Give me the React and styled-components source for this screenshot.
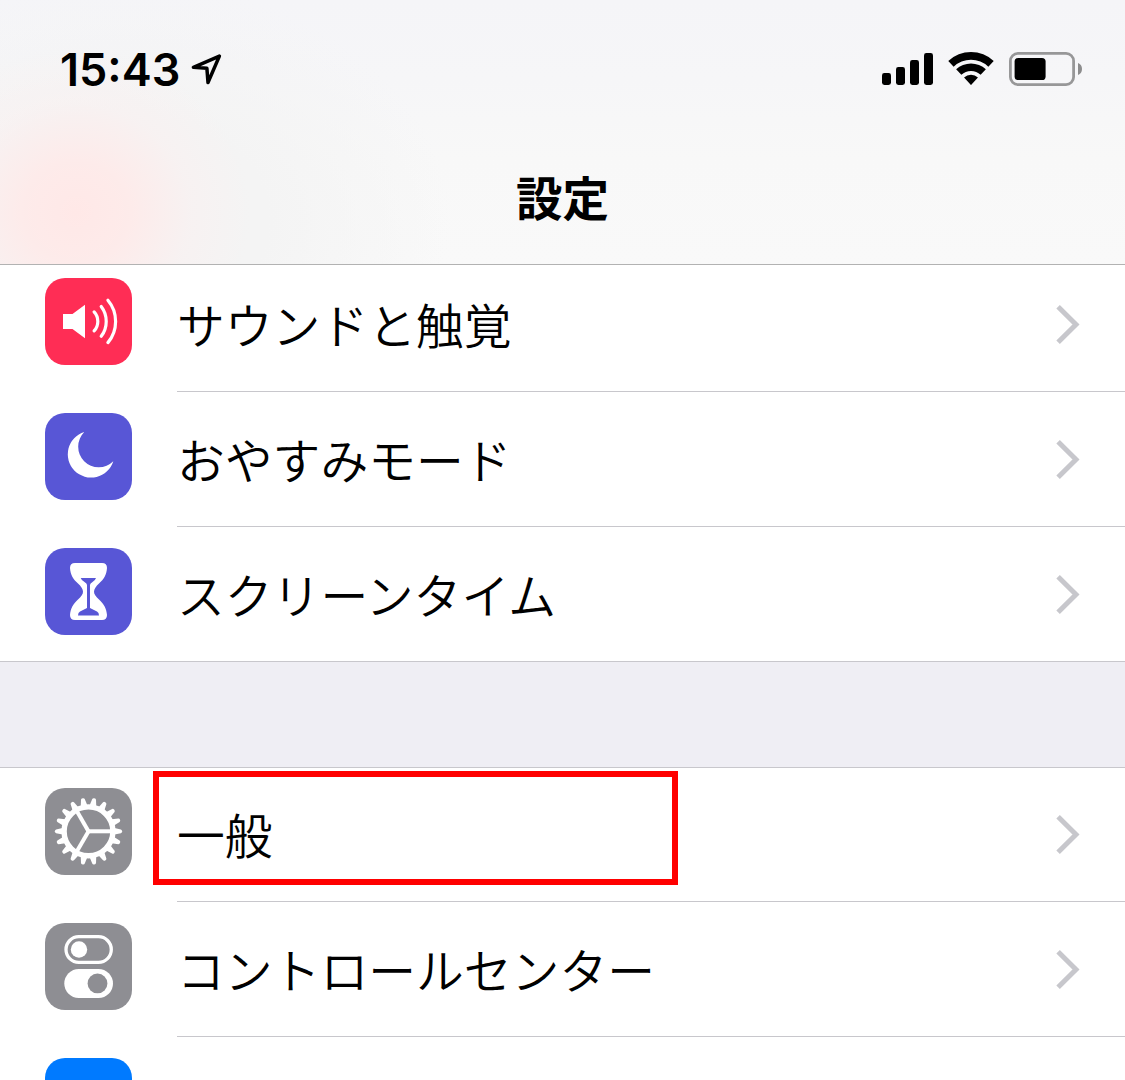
import styled, { createGlobalStyle } from 'styled-components';

const GlobalStyle = createGlobalStyle`
  * {
    box-sizing: border-box;
  }

  body {
    margin: 0;
    background-color: #efeef4;
  }
`;

const Screen = styled.div`
  display: flex;
  flex-direction: column;
  width: 1125px;
  height: 1080px;
  overflow: hidden;
  color: black;
  background-color: #efeef4;
  font-family: 'Noto Sans CJK JP', sans-serif;
`;

const Header = styled.header`
  position: relative;
  z-index: 1;
  flex: none;
  height: 265px;
  border-bottom: 1px solid #b2b2b2;
  background: radial-gradient(
      ellipse 175px 165px at 76px 212px,
      #ffe8e7 0%,
      rgba(255, 233, 232, 0.85) 30%,
      rgba(252, 238, 238, 0.4) 65%,
      rgba(246, 245, 245, 0) 100%
    ),
    radial-gradient(
      ellipse 330px 240px at 120px 220px,
      #f4f4f4 45%,
      rgba(246, 246, 247, 0) 100%
    ),
    linear-gradient(#f5f5f8 0%, #f6f6f8 30%, #f8f8f8 60%, #f9f9f9 100%);
`;

const StatusBar = styled.div`
  display: flex;
  align-items: center;
  justify-content: space-between;
  height: 138px;
  padding: 0 42px 0 60px;
`;

const StatusGroup = styled.div`
  display: flex;
  align-items: center;
  gap: ${(props) => props.$gap}px;
`;

const Time = styled.span`
  font-family: Inter, sans-serif;
  font-size: 45px;
  font-weight: 600;
  line-height: 54px;
  padding-top: 1px;
`;

const Title = styled.h1`
  margin: 0;
  font-size: 46.5px;
  font-weight: 700;
  line-height: 68px;
  text-align: center;
  padding-top: 24px;
`;

const List = styled.ul`
  flex: none;
  margin: ${(props) => (props.$scrolled ? '-8px' : '105px')} 0 0;
  padding: 0;
  list-style: none;
  background-color: white;
  border-top: ${(props) => (props.$scrolled ? 0 : '1px solid #c8c7cc')};

  > :first-child {
    margin-top: ${(props) => (props.$scrolled ? 0 : '-1px')};
  }
`;

const Row = styled.li`
  position: relative;
  display: flex;
  height: 135px;
  padding-left: 45px;
  border-bottom: ${(props) => (props.$last ? '1px solid #c8c7cc' : 0)};
`;

const AppIcon = styled.svg`
  flex: none;
  width: 87px;
  height: 87px;
  margin-top: 21px;
  border-radius: 20px;
  background-color: ${(props) => props.$color};
`;

const RowBody = styled.div`
  display: flex;
  flex: 1;
  align-items: center;
  justify-content: space-between;
  margin-left: 45px;
  padding-right: 44px;
  border-bottom: ${(props) => (props.$last ? 0 : '1px solid #c8c7cc')};
`;

const Label = styled.span`
  font-size: 47.8px;
  font-weight: 350;
  line-height: 70px;
`;

const Highlight = styled.div`
  position: absolute;
  top: 4px;
  left: 153px;
  width: 525px;
  height: 114px;
  border: 6px solid #ff0000;
`;

const LocationIcon = () => (
  <svg width='33' height='34' viewBox='189 51.5 33 34'>
    <path
      d='M219.4 55.6 193.4 66.8 206.9 67.8 208 82Z'
      fill='none'
      stroke='black'
      strokeWidth='3.5'
      strokeLinejoin='round'
    />
  </svg>
);

const SignalIcon = () => (
  <svg width='51' height='34' viewBox='0 0 51 34'>
    <rect x='0' y='21' width='9' height='12' rx='2.4' />
    <rect x='14' y='15' width='9' height='18' rx='2.4' />
    <rect x='28' y='8' width='9' height='25' rx='2.4' />
    <rect x='42' y='1' width='9' height='32' rx='2.4' />
  </svg>
);

// sector of a ring, symmetric about the vertical through (23, 33)
const ringSector = (outer, inner, degrees) => {
  const a = (degrees * Math.PI) / 180;
  const sin = Math.sin(a);
  const cos = Math.cos(a);
  return `M${23 - outer * sin} ${33 - outer * cos}
    A${outer} ${outer} 0 0 1 ${23 + outer * sin} ${33 - outer * cos}
    L${23 + inner * sin} ${33 - inner * cos}
    A${inner} ${inner} 0 0 0 ${23 - inner * sin} ${33 - inner * cos}Z`;
};

const WifiIcon = () => (
  <svg width='46' height='34' viewBox='0 0 46 34'>
    <path d={ringSector(33, 25.2, 43.5)} />
    <path d={ringSector(21.6, 14, 43.5)} />
    <path d={ringSector(10.2, 0.1, 43)} />
  </svg>
);

const BatteryIcon = () => (
  <svg width='74' height='34' viewBox='0 0 74 34'>
    <rect
      x='1.4'
      y='1.4'
      width='63.2'
      height='31.2'
      rx='7.6'
      fill='none'
      stroke='#979798'
      strokeWidth='2.8'
    />
    <rect x='5.6' y='6' width='31' height='22' rx='3.6' />
    <path d='M69 11C71.6 12 73 14.3 73 17S71.6 22 69 23Z' fill='#8c8c8d' />
  </svg>
);

const Chevron = () => (
  <svg width='25' height='41' viewBox='0 0 25 41'>
    <path
      d='M2.1 2.7 20 20.500 2.1 38.3'
      fill='none'
      stroke='#c7c7cc'
      strokeWidth='5'
    />
  </svg>
);

const SoundGlyph = () => (
  <>
    <path d='M18 36H27.5L40 26.7V60.3L27.5 51H18Z' fill='white' />
    <path
      d='M49.1 33.9A14 14 0 0 1 49.1 52.9M56.2 28.5A24.6 24.6 0 0 1 56.2 58.3M62.9 22.2A33 33 0 0 1 62.9 64.6'
      fill='none'
      stroke='white'
      strokeWidth='3.2'
      strokeLinecap='round'
    />
  </>
);

const MoonGlyph = () => (
  <path
    d='M39.3 19A23.3 23.3 0 1 0 68.3 48.3A20.4 20.4 0 0 1 39.3 19Z'
    fill='white'
  />
);

const HourglassGlyph = () => (
  <>
    <path
      d='M30 15H57Q62 15 62 20C61.5 27 59 31 54 35.5C51 38.3 49 41 49 43.7S51 48.5 54 51.5C59 56 61.5 60.5 62 67Q62 72 57 72H30Q25 72 25 67C25.5 60.5 28 56 33 51.5C36 48.5 38 46.4 38 43.7S36 38.3 33 35.5C28 31 25.5 27 25 20Q25 15 30 15Z'
      fill='white'
    />
    <path
      d='M35.7 30H51Q50.5 32 47.5 34Q45 35.7 45 37V60L52 63.4Q54 64.4 54 67.6H33Q33 64.4 35 63.4L42 60V37Q42 35.7 39.5 34Q36.2 32 35.7 30Z'
      fill='#5856d6'
    />
  </>
);

const TEETH = Array.from({ length: 18 }, (_, i) => i * 20);
const SPOKES = [0, 120, 240];

const GearGlyph = () => (
  <g transform='translate(43.5 43.3)' fill='white'>
    <circle r='24.4' fill='none' stroke='white' strokeWidth='5.4' />
    {TEETH.map((angle) => (
      <path
        key={angle}
        d='M26 -3.3 32.4 -1.9Q33.6 -1.6 33.6 0T32.4 1.9L26 3.3Z'
        transform={`rotate(${angle})`}
      />
    ))}
    {SPOKES.map((angle) => (
      <rect
        key={angle}
        x='-1'
        y='-2'
        width='25'
        height='4'
        transform={`rotate(${angle})`}
      />
    ))}
  </g>
);

const TogglesGlyph = () => (
  <>
    <rect
      x='21'
      y='13.7'
      width='45.3'
      height='25.7'
      rx='12.85'
      fill='none'
      stroke='white'
      strokeWidth='3.3'
    />
    <circle cx='34' cy='26.5' r='8.2' fill='white' />
    <rect x='19.3' y='46' width='48.7' height='29' rx='14.5' fill='white' />
    <circle cx='52.5' cy='60.4' r='9.9' fill='#8e8e93' />
  </>
);

const soundItems = [
  { label: 'サウンドと触覚', color: '#ff2d55', Glyph: SoundGlyph },
  { label: 'おやすみモード', color: '#5856d6', Glyph: MoonGlyph },
  { label: 'スクリーンタイム', color: '#5856d6', Glyph: HourglassGlyph },
];

const generalItems = [
  { label: '一般', color: '#8e8e93', Glyph: GearGlyph, highlighted: true },
  { label: 'コントロールセンター', color: '#8e8e93', Glyph: TogglesGlyph },
  { label: '', color: '#007aff' },
];

const SettingsList = ({ items, scrolled }) => (
  <List $scrolled={scrolled}>
    {items.map(({ label, color, Glyph, highlighted }, i) => {
      const last = i === items.length - 1;
      return (
        <Row key={color + label} $last={last}>
          <AppIcon viewBox='0 0 87 87' $color={color}>
            {Glyph && <Glyph />}
          </AppIcon>
          <RowBody $last={last}>
            <Label>{label}</Label>
            <Chevron />
          </RowBody>
          {highlighted && <Highlight />}
        </Row>
      );
    })}
  </List>
);

export default function App() {
  return (
    <>
      <GlobalStyle />
      <Screen>
        <Header>
          <StatusBar>
            <StatusGroup $gap={9}>
              <Time>15:43</Time>
              <LocationIcon />
            </StatusGroup>
            <StatusGroup $gap={15}>
              <SignalIcon />
              <WifiIcon />
              <BatteryIcon />
            </StatusGroup>
          </StatusBar>
          <Title>設定</Title>
        </Header>
        <SettingsList items={soundItems} scrolled />
        <SettingsList items={generalItems} />
      </Screen>
    </>
  );
}
